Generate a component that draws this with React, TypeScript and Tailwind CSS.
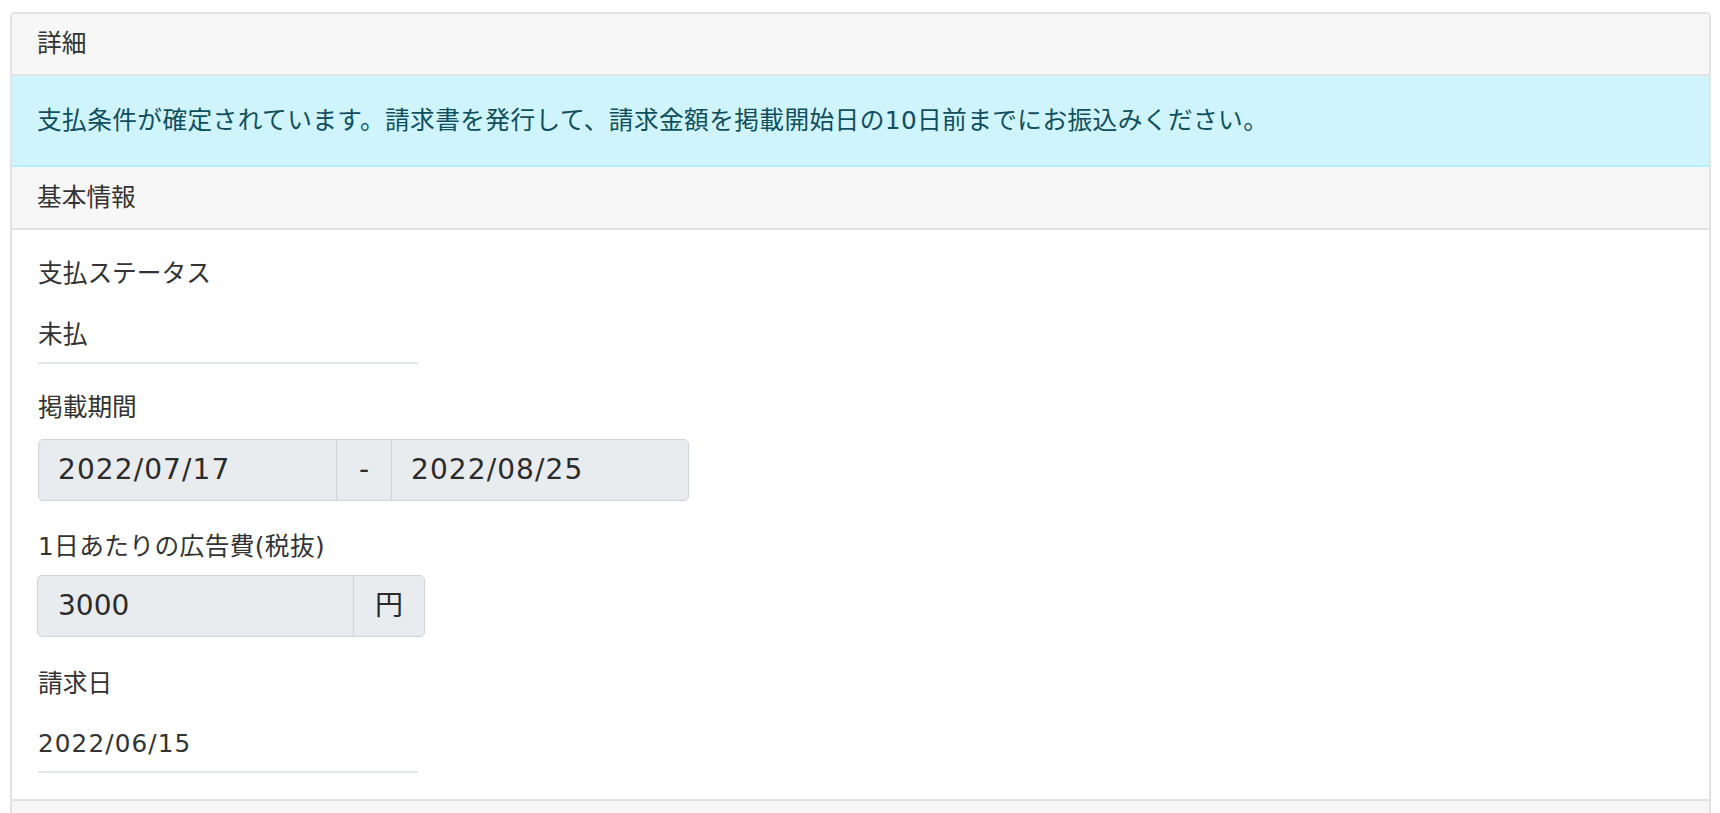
import React from "react";

const font = "font-['DejaVu_Sans','Noto_Sans_CJK_JP',sans-serif]";

export default function App() {
  return (
    <div className={`min-h-screen bg-white pt-[12px] pl-[10px] pr-[9px] text-[#333333] ${font}`}>
      <div className="rounded-t-[5px] border-2 border-b-0 border-[#e2e2e2] overflow-hidden">
        {/* card header */}
        <div className="h-[62px] bg-[#f7f7f7] border-b-2 border-[#e2e2e2] flex items-center pl-[25px] text-[24.7px] leading-[36px]">
          詳細
        </div>
        {/* alert */}
        <div className="h-[91px] bg-[#cff4fc] border-b-2 border-[#b6effb] flex items-center pl-[25px] text-[24.7px] leading-[36px] tracking-[0.4px] text-[#0f4f5e]">
          支払条件が確定されています。請求書を発行して、請求金額を掲載開始日の10日前までにお振込みください。
        </div>
        {/* section header */}
        <div className="h-[63px] bg-[#f7f7f7] border-b-2 border-[#e2e2e2] flex items-center pl-[25px] text-[24.7px] leading-[36px]">
          基本情報
        </div>
        {/* body */}
        <div className="pt-[26px] pb-[26px] pl-[26px] text-[24.7px] leading-[36px]">
          <div>支払ステータス</div>
          <div className="mt-[25px] w-[380px] pb-[9px] border-b-2 border-[#e3e6ea]">未払</div>

          <div className="mt-[26px]">掲載期間</div>
          <div className="mt-[13px] flex w-[651px] h-[62px] rounded-[5px] border border-[#ced4da] bg-[#e9ecef] text-[28px] text-[#2b2b2b]">
            <div className="w-[297px] flex items-center pl-[19px] tracking-[1.1px]">2022/07/17</div>
            <div className="w-[56px] flex items-center justify-center border-x border-[#ced4da]">-</div>
            <div className="flex-1 flex items-center pl-[19px] tracking-[1.1px]">2022/08/25</div>
          </div>

          <div className="mt-[28px] tracking-[0.4px]">1日あたりの広告費(税抜)</div>
          <div className="mt-[10px] -ml-[1px] flex w-[388px] h-[62px] rounded-[5px] border border-[#ced4da] bg-[#e9ecef] text-[28px] text-[#2b2b2b]">
            <div className="w-[315px] flex items-center pl-[20px]">3000</div>
            <div className="flex-1 flex items-center justify-center border-l border-[#ced4da]">円</div>
          </div>

          <div className="mt-[29px]">請求日</div>
          <div className="mt-[24px] w-[380px] pb-[9px] border-b-2 border-[#e3e6ea] tracking-[1.1px]">2022/06/15</div>
        </div>
        {/* footer */}
        <div className="h-[40px] bg-[#f7f7f7] border-t-2 border-[#e2e2e2]" />
      </div>
    </div>
  );
}
